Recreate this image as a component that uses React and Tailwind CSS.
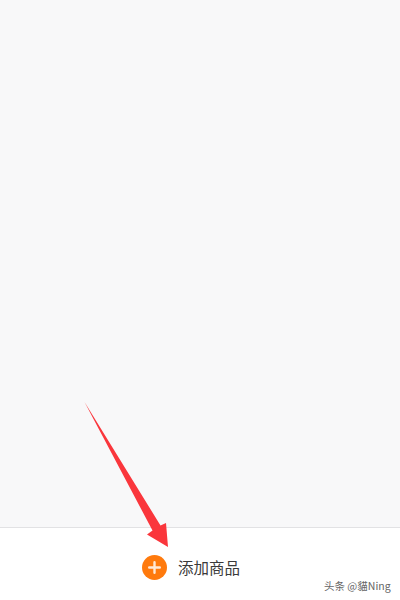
import React from 'react';

const CJK = { fontFamily: '"Noto Sans CJK SC", "Liberation Sans", sans-serif' };

function PlusIcon() {
  return (
    <span className="flex h-[25px] w-[25px] items-center justify-center rounded-full bg-[#ff7a0d]">
      <svg width="13" height="13" viewBox="0 0 13 13">
        <path d="M6.5 1.2v10.6M1.2 6.5h10.6" stroke="#ffe9d6" strokeWidth="2.4" strokeLinecap="round" />
      </svg>
    </span>
  );
}

export default function App() {
  return (
    <div className="relative flex h-[600px] w-[400px] flex-col overflow-hidden bg-white" style={CJK}>
      <div className="h-[527px] bg-[#f8f8f9]" />
      <div className="h-px bg-[#e2e2e4]" />
      <div className="flex flex-1 items-start justify-center bg-white pt-[27px]">
        <button className="mr-[18px] flex items-center gap-[11px]">
          <PlusIcon />
          <span className="text-[15.5px] leading-[25px] text-[#3a3a3a]">添加商品</span>
        </button>
      </div>

      {/* red annotation arrow */}
      <svg className="absolute left-0 top-0" width="400" height="600" viewBox="0 0 400 600">
        <path d="M84.5 402L160.5 525.5L166 523L168 547L147 534.5L152.5 530.5Z" fill="#fa363c" />
      </svg>

      {/* watermark */}
      <span className="absolute left-[324px] top-[579px] text-[10.5px] leading-[14px] text-[#666]">头条 @貓Ning</span>
    </div>
  );
}
